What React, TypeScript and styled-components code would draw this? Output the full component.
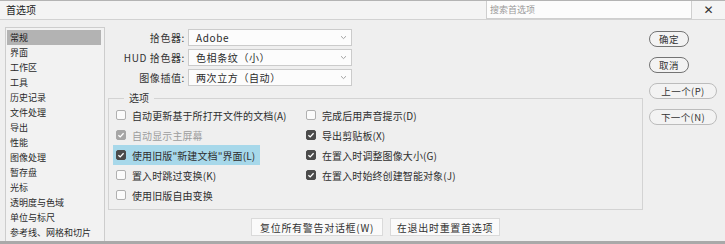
import React from "react";
import styled, { createGlobalStyle, css } from "styled-components";

const Global = createGlobalStyle`
  html, body { margin: 0; padding: 0; background: #efefef; }
  body { font-family: "Noto Sans CJK SC", "Noto Sans", sans-serif; color: #2e2e2e; }
  * { box-sizing: border-box; }
`;

const Window = styled.div`
  width: 725px;
  height: 244px;
  display: flex;
  flex-direction: column;
  background: #efefef;
  border-top: 1px solid #b4b4b4;
  border-bottom: 3px solid #a9a9a9;
  overflow: hidden;
`;

const TitleBar = styled.div`
  height: 19px;
  flex: none;
  display: flex;
  align-items: center;
  background: #f4f4f4;
  border-bottom: 1px solid #d2d2d2;
  padding-left: 6px;
`;

const Title = styled.div`
  font-size: 10px;
  color: #222;
  flex: 1;
  line-height: 12px;
`;

const Search = styled.div`
  width: 206px;
  height: 18px;
  margin-top: -1px;
  background: #fcfcfc;
  border: 1px solid #cfcfcf;
  border-top: none;
  font-size: 9px;
  color: #9a9a9a;
  display: flex;
  align-items: center;
  padding-left: 3px;
`;

const Close = styled.div`
  width: 33px;
  text-align: center;
  font-family: "DejaVu Sans", sans-serif;
  font-size: 12px;
  color: #333;
  line-height: 12px;
`;

const Body = styled.div`
  flex: 1;
  display: flex;
  padding: 7px 0 0 5px;
  min-height: 0;
`;

const Sidebar = styled.div`
  width: 100px;
  flex: none;
  background: #f2f2f2;
  border: 1px solid #cdcdcd;
  border-bottom: none;
  padding: 2px 3px 0 1px;
`;

const NavItem = styled.div<{ $active?: boolean }>`
  height: 15px;
  line-height: 15px;
  font-size: 9px;
  padding-left: 3px;
  color: #2a2a2a;
  white-space: nowrap;
  ${(p) =>
    p.$active &&
    css`
      background: #b3b3b3;
      color: #1e1e1e;
    `}
`;

const Main = styled.div`
  width: 535px;
  flex: none;
  margin-left: 3px;
  display: flex;
  flex-direction: column;
`;

const Form = styled.div`
  display: grid;
  grid-template-columns: 77px 164px;
  column-gap: 3px;
  row-gap: 3px;
  margin-top: 2px;
`;

const Label = styled.div`
  text-align: right;
  font-size: 10px;
  line-height: 17px;
  color: #333;
  letter-spacing: 0.6px;
`;

const Select = styled.div`
  height: 17px;
  background: #fcfcfc;
  border: 1px solid #cbcbcb;
  display: flex;
  align-items: center;
  padding: 0 4px 0 7px;
  font-size: 10px;
  color: #2a2a2a;
  letter-spacing: 0.6px;
`;

const SelectText = styled.span`
  flex: 1;
`;

const Group = styled.fieldset`
  margin: 6px 0 0 0;
  padding: 1px 0 4px 4px;
  border: 1px solid #d3d3d3;
  min-width: 0;
  display: flex;
`;

const Legend = styled.legend`
  font-size: 10px;
  line-height: 12px;
  padding: 0 5px;
  margin-left: 11px;
  color: #333;
`;

const Column = styled.div<{ $width: number }>`
  width: ${(p) => p.$width}px;
  flex: none;
  min-width: 0;
  display: flex;
  flex-direction: column;
  align-items: flex-start;
`;

const Row = styled.div<{ $highlight?: boolean; $disabled?: boolean }>`
  height: 20px;
  display: flex;
  align-items: center;
  gap: 6px;
  padding: 0 5px 0 3px;
  font-size: 10px;
  letter-spacing: 0.1px;
  white-space: nowrap;
  color: ${(p) => (p.$disabled ? "#9d9d9d" : "#2e2e2e")};
  background: ${(p) => (p.$highlight ? "#a7d8ea" : "transparent")};
`;

const Box = styled.span<{ $checked?: boolean; $disabled?: boolean }>`
  width: 10px;
  height: 10px;
  flex: none;
  border-radius: 2px;
  display: flex;
  align-items: center;
  justify-content: center;
  border: 1px solid
    ${(p) => (p.$checked ? (p.$disabled ? "#a6a6a6" : "#4b4b4b") : "#b0b0b0")};
  background: ${(p) =>
    p.$checked ? (p.$disabled ? "#a6a6a6" : "#4b4b4b") : "#fbfbfb"};
`;

const Check = ({ checked, disabled }: { checked?: boolean; disabled?: boolean }) => (
  <Box $checked={checked} $disabled={disabled}>
    {checked && (
      <svg width="8" height="8" viewBox="0 0 8 8">
        <path d="M1.4 4.2 L3.2 5.9 L6.6 2.2" fill="none" stroke="#fff" strokeWidth="1.3" />
      </svg>
    )}
  </Box>
);

const Actions = styled.div`
  display: flex;
  justify-content: center;
  gap: 7px;
  margin-top: 8px;
`;

const FlatButton = styled.div<{ $width: number }>`
  width: ${(p) => p.$width}px;
  height: 18px;
  background: #fafafa;
  border: 1px solid #dadada;
  font-size: 10px;
  letter-spacing: 0.7px;
  color: #333;
  display: flex;
  align-items: center;
  justify-content: center;
`;

const Side = styled.div`
  margin-left: 6px;
  padding-top: 4px;
  display: flex;
  flex-direction: column;
  align-items: flex-start;
  gap: 10px;
`;

const Pill = styled.div<{ $width: number; $strong?: boolean }>`
  width: ${(p) => p.$width}px;
  height: 16px;
  border-radius: 8px;
  border: 1px solid ${(p) => (p.$strong ? "#747474" : "#bcbcbc")};
  background: #f3f3f3;
  font-size: 9.5px;
  color: #333;
  letter-spacing: 0.4px;
  display: flex;
  align-items: center;
  justify-content: center;
`;

const nav = [
  "常规",
  "界面",
  "工作区",
  "工具",
  "历史记录",
  "文件处理",
  "导出",
  "性能",
  "图像处理",
  "暂存盘",
  "光标",
  "透明度与色域",
  "单位与标尺",
  "参考线、网格和切片",
];

const Chevron = () => (
  <svg width="7" height="5" viewBox="0 0 7 5">
    <path d="M1 1.2 L3.5 3.6 L6 1.2" fill="none" stroke="#9a9a9a" strokeWidth="0.9" />
  </svg>
);

export default function App() {
  return (
    <>
      <Global />
      <Window>
        <TitleBar>
          <Title>首选项</Title>
          <Search>搜索首选项</Search>
          <Close>✕</Close>
        </TitleBar>
        <Body>
          <Sidebar>
            {nav.map((n, i) => (
              <NavItem key={n} $active={i === 0}>
                {n}
              </NavItem>
            ))}
          </Sidebar>
          <Main>
            <Form>
              <Label>拾色器:</Label>
              <Select>
                <SelectText>Adobe</SelectText>
                <Chevron />
              </Select>
              <Label>HUD 拾色器:</Label>
              <Select>
                <SelectText>色相条纹（小）</SelectText>
                <Chevron />
              </Select>
              <Label>图像插值:</Label>
              <Select>
                <SelectText>两次立方（自动）</SelectText>
                <Chevron />
              </Select>
            </Form>
            <Group>
              <Legend>选项</Legend>
              <Column $width={190}>
                <Row>
                  <Check />
                  自动更新基于所打开文件的文档(A)
                </Row>
                <Row $disabled>
                  <Check checked disabled />
                  自动显示主屏幕
                </Row>
                <Row $highlight>
                  <Check checked />
                  使用旧版"新建文档"界面(L)
                </Row>
                <Row>
                  <Check />
                  置入时跳过变换(K)
                </Row>
                <Row>
                  <Check />
                  使用旧版自由变换
                </Row>
              </Column>
              <Column $width={300}>
                <Row>
                  <Check />
                  完成后用声音提示(D)
                </Row>
                <Row>
                  <Check checked />
                  导出剪贴板(X)
                </Row>
                <Row>
                  <Check checked />
                  在置入时调整图像大小(G)
                </Row>
                <Row>
                  <Check checked />
                  在置入时始终创建智能对象(J)
                </Row>
              </Column>
            </Group>
            <Actions>
              <FlatButton $width={132}>复位所有警告对话框(W)</FlatButton>
              <FlatButton $width={110}>在退出时重置首选项</FlatButton>
            </Actions>
          </Main>
          <Side>
            <Pill $width={40} $strong>确定</Pill>
            <Pill $width={40} $strong>取消</Pill>
            <Pill $width={68}>上一个(P)</Pill>
            <Pill $width={68}>下一个(N)</Pill>
          </Side>
        </Body>
      </Window>
    </>
  );
}
